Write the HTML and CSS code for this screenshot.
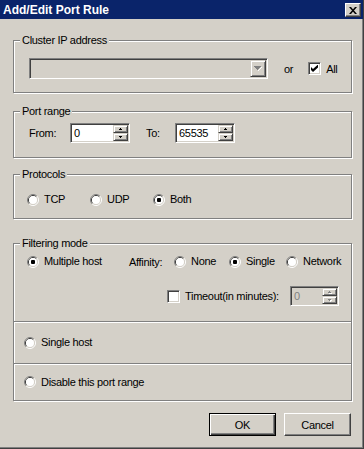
FILE: index.html
```html
<!DOCTYPE html>
<html>
<head>
<meta charset="utf-8">
<link rel="stylesheet" href="styles.css">
</head>
<body>
<div class="window">
  <div class="titlebar">
    <span class="title">Add/Edit Port Rule</span>
    <span class="close"><svg width="8" height="7" viewBox="0 0 8 7"><path d="M0 0H2L8 7H6Z M6 0H8L2 7H0Z" fill="#000"/></svg></span>
  </div>
  <div class="client">
    <fieldset class="group g1">
      <legend>Cluster IP address</legend>
      <div class="row cluster-row">
        <div class="combo sunken">
          <div class="sbtn combo-btn"><svg width="8" height="5" viewBox="0 0 8 5" shape-rendering="crispEdges"><path d="M1 1H8V2H7V3H6V4H5V5H4V4H5V3H6V2H7V1Z" fill="#fff"/><path d="M0 0H7V1H6V2H5V3H4V4H3V3H2V2H1V1H0Z" fill="#808080"/></svg></div>
        </div>
        <span class="or">or</span>
        <span class="check all"><span class="cbox"><svg width="7" height="7" viewBox="0 0 7 7"><path d="M0 2L2 4L7 -0.5V2.5L2 7L0 5Z" fill="#000"/></svg></span>All</span>
      </div>
    </fieldset>

    <fieldset class="group g2">
      <legend>Port range</legend>
      <div class="row port-row">
        <span class="lbl from-lbl">From:</span>
        <div class="spin sunken">
          <span class="spin-val">0</span>
          <span class="spin-btns">
            <span class="sbtn"><svg width="3" height="2" viewBox="0 0 3 2" shape-rendering="crispEdges"><path d="M1 0H2V1H3V2H0V1H1Z" fill="#000"/></svg></span>
            <span class="sbtn"><svg width="3" height="2" viewBox="0 0 3 2" shape-rendering="crispEdges"><path d="M0 0H3V1H2V2H1V1H0Z" fill="#000"/></svg></span>
          </span>
        </div>
        <span class="lbl to-lbl">To:</span>
        <div class="spin sunken">
          <span class="spin-val">65535</span>
          <span class="spin-btns">
            <span class="sbtn"><svg width="3" height="2" viewBox="0 0 3 2" shape-rendering="crispEdges"><path d="M1 0H2V1H3V2H0V1H1Z" fill="#000"/></svg></span>
            <span class="sbtn"><svg width="3" height="2" viewBox="0 0 3 2" shape-rendering="crispEdges"><path d="M0 0H3V1H2V2H1V1H0Z" fill="#000"/></svg></span>
          </span>
        </div>
      </div>
    </fieldset>

    <fieldset class="group g3">
      <legend>Protocols</legend>
      <div class="row proto-row">
        <span class="opt proto"><svg class="radio" width="12" height="12" viewBox="0 0 12 12"><path d="M2.11 9.89A5.5 5.5 0 0 1 9.89 2.11" stroke="#808080"/><path d="M9.89 2.11A5.5 5.5 0 0 1 2.11 9.89" stroke="#fff"/><path d="M2.82 9.18A4.5 4.5 0 0 1 9.18 2.82" stroke="#404040"/><path d="M9.18 2.82A4.5 4.5 0 0 1 2.82 9.18" stroke="#d4d0c8"/><circle cx="6" cy="6" r="4" fill="#fff"/></svg>TCP</span>
        <span class="opt proto"><svg class="radio" width="12" height="12" viewBox="0 0 12 12"><path d="M2.11 9.89A5.5 5.5 0 0 1 9.89 2.11" stroke="#808080"/><path d="M9.89 2.11A5.5 5.5 0 0 1 2.11 9.89" stroke="#fff"/><path d="M2.82 9.18A4.5 4.5 0 0 1 9.18 2.82" stroke="#404040"/><path d="M9.18 2.82A4.5 4.5 0 0 1 2.82 9.18" stroke="#d4d0c8"/><circle cx="6" cy="6" r="4" fill="#fff"/></svg>UDP</span>
        <span class="opt proto"><svg class="radio" width="12" height="12" viewBox="0 0 12 12"><path d="M2.11 9.89A5.5 5.5 0 0 1 9.89 2.11" stroke="#808080"/><path d="M9.89 2.11A5.5 5.5 0 0 1 2.11 9.89" stroke="#fff"/><path d="M2.82 9.18A4.5 4.5 0 0 1 9.18 2.82" stroke="#404040"/><path d="M9.18 2.82A4.5 4.5 0 0 1 2.82 9.18" stroke="#d4d0c8"/><circle cx="6" cy="6" r="4" fill="#fff"/><rect x="4" y="4" width="4" height="4" rx="1" fill="#000"/></svg>Both</span>
      </div>
    </fieldset>

    <fieldset class="group g4">
      <legend>Filtering mode</legend>
      <div class="filter-body">
        <div class="row mode-row">
          <span class="opt multi"><svg class="radio" width="12" height="12" viewBox="0 0 12 12"><path d="M2.11 9.89A5.5 5.5 0 0 1 9.89 2.11" stroke="#808080"/><path d="M9.89 2.11A5.5 5.5 0 0 1 2.11 9.89" stroke="#fff"/><path d="M2.82 9.18A4.5 4.5 0 0 1 9.18 2.82" stroke="#404040"/><path d="M9.18 2.82A4.5 4.5 0 0 1 2.82 9.18" stroke="#d4d0c8"/><circle cx="6" cy="6" r="4" fill="#fff"/><rect x="4" y="4" width="4" height="4" rx="1" fill="#000"/></svg>Multiple host</span>
          <span class="lbl affinity">Affinity:</span>
          <span class="opt none"><svg class="radio" width="12" height="12" viewBox="0 0 12 12"><path d="M2.11 9.89A5.5 5.5 0 0 1 9.89 2.11" stroke="#808080"/><path d="M9.89 2.11A5.5 5.5 0 0 1 2.11 9.89" stroke="#fff"/><path d="M2.82 9.18A4.5 4.5 0 0 1 9.18 2.82" stroke="#404040"/><path d="M9.18 2.82A4.5 4.5 0 0 1 2.82 9.18" stroke="#d4d0c8"/><circle cx="6" cy="6" r="4" fill="#fff"/></svg>None</span>
          <span class="opt single"><svg class="radio" width="12" height="12" viewBox="0 0 12 12"><path d="M2.11 9.89A5.5 5.5 0 0 1 9.89 2.11" stroke="#808080"/><path d="M9.89 2.11A5.5 5.5 0 0 1 2.11 9.89" stroke="#fff"/><path d="M2.82 9.18A4.5 4.5 0 0 1 9.18 2.82" stroke="#404040"/><path d="M9.18 2.82A4.5 4.5 0 0 1 2.82 9.18" stroke="#d4d0c8"/><circle cx="6" cy="6" r="4" fill="#fff"/><rect x="4" y="4" width="4" height="4" rx="1" fill="#000"/></svg>Single</span>
          <span class="opt"><svg class="radio" width="12" height="12" viewBox="0 0 12 12"><path d="M2.11 9.89A5.5 5.5 0 0 1 9.89 2.11" stroke="#808080"/><path d="M9.89 2.11A5.5 5.5 0 0 1 2.11 9.89" stroke="#fff"/><path d="M2.82 9.18A4.5 4.5 0 0 1 9.18 2.82" stroke="#404040"/><path d="M9.18 2.82A4.5 4.5 0 0 1 2.82 9.18" stroke="#d4d0c8"/><circle cx="6" cy="6" r="4" fill="#fff"/></svg>Network</span>
        </div>
        <div class="row timeout-row">
          <span class="check"><span class="cbox"></span><span class="timeout-lbl">Timeout(in minutes):</span></span>
          <div class="spin sunken disabled small">
            <span class="spin-val">0</span>
            <span class="spin-btns">
              <span class="sbtn"><svg width="4" height="3" viewBox="0 0 4 3" shape-rendering="crispEdges"><path d="M2 1H3V2H4V3H1V2H2Z" fill="#fff"/><path d="M1 0H2V1H3V2H0V1H1Z" fill="#808080"/></svg></span>
              <span class="sbtn"><svg width="4" height="3" viewBox="0 0 4 3" shape-rendering="crispEdges"><path d="M1 1H4V2H3V3H2V2H1Z" fill="#fff"/><path d="M0 0H3V1H2V2H1V1H0Z" fill="#808080"/></svg></span>
            </span>
          </div>
        </div>
      </div>
    </fieldset>

    <div class="panel p1">
      <span class="opt"><svg class="radio" width="12" height="12" viewBox="0 0 12 12"><path d="M2.11 9.89A5.5 5.5 0 0 1 9.89 2.11" stroke="#808080"/><path d="M9.89 2.11A5.5 5.5 0 0 1 2.11 9.89" stroke="#fff"/><path d="M2.82 9.18A4.5 4.5 0 0 1 9.18 2.82" stroke="#404040"/><path d="M9.18 2.82A4.5 4.5 0 0 1 2.82 9.18" stroke="#d4d0c8"/><circle cx="6" cy="6" r="4" fill="#fff"/></svg>Single host</span>
    </div>
    <div class="panel p2">
      <span class="opt"><svg class="radio" width="12" height="12" viewBox="0 0 12 12"><path d="M2.11 9.89A5.5 5.5 0 0 1 9.89 2.11" stroke="#808080"/><path d="M9.89 2.11A5.5 5.5 0 0 1 2.11 9.89" stroke="#fff"/><path d="M2.82 9.18A4.5 4.5 0 0 1 9.18 2.82" stroke="#404040"/><path d="M9.18 2.82A4.5 4.5 0 0 1 2.82 9.18" stroke="#d4d0c8"/><circle cx="6" cy="6" r="4" fill="#fff"/></svg>Disable this port range</span>
    </div>

    <div class="buttons">
      <button class="btn default">OK</button>
      <button class="btn">Cancel</button>
    </div>
  </div>
</div>
</body>
</html>
```

FILE: styles.css
```css
* { box-sizing: border-box; }
html, body { margin: 0; padding: 0; }
body {
  width: 364px;
  height: 449px;
  overflow: hidden;
  background: #d4d0c8;
  font-family: "Liberation Sans", Arial, sans-serif;
  font-size: 11px;
  letter-spacing: -0.3px;
  color: #000;
}
.window {
  width: 364px;
  height: 449px;
  border-right: 1px solid #404040;
  border-bottom: 1px solid #404040;
  box-shadow: inset -1px -1px 0 #808080;
  display: flex;
  flex-direction: column;
}
.titlebar {
  height: 19px;
  flex: none;
  background: #0a246a;
  color: #fff;
  display: flex;
  justify-content: space-between;
  align-items: flex-start;
  padding: 0 2px 0 3px;
}
.title {
  font-weight: bold;
  font-size: 12px;
  letter-spacing: 0;
  line-height: 19px;
  padding-top: 1px;
}
.close {
  width: 16px;
  height: 14px;
  margin-top: 3px;
  background: #d4d0c8;
  border: 1px solid;
  border-color: #fff #404040 #404040 #fff;
  box-shadow: inset -1px -1px 0 #808080;
  display: flex;
  align-items: center;
  justify-content: center;
}
.client {
  flex: 1;
  padding: 0 11px 0 13px;
  display: flex;
  flex-direction: column;
}

/* etched group boxes */
.group {
  margin: 0;
  padding: 0;
  min-width: 0;
  border: 1px solid #808080;
  box-shadow: inset 1px 1px 0 #fff, 1px 1px 0 #fff;
}
.group legend {
  margin-left: 6px;
  padding: 0 2px;
  height: 13px;
  line-height: 13px;
  background: #d4d0c8;
}
.g1 { margin-top: 15px; }
.g2 { margin-top: 12px; }
.g3 { margin-top: 10px; }
.g4 { margin-top: 18px; }

.row {
  display: flex;
  align-items: center;
}
.cluster-row { padding: 11px 0 13px 15px; }
.port-row { padding: 5px 0 14px 15px; }
.proto-row { padding: 12px 0 12px 13px; height: 37px; }
.filter-body { padding: 5px 0 15px 13px; }
.mode-row { height: 13px; }
.timeout-row { margin-top: 18px; margin-left: 140px; }

.panel {
  border: 1px solid #808080;
  box-shadow: inset 1px 1px 0 #fff, 1px 1px 0 #fff;
  margin-top: -1px;
  display: flex;
  align-items: center;
  padding-left: 10px;
}
.p1 { height: 43px; }
.p2 { height: 38px; }

/* controls */
.sunken {
  border: 1px solid;
  border-color: #808080 #fff #fff #808080;
  box-shadow: inset 1px 1px 0 #404040, inset -1px -1px 0 #d4d0c8;
  padding: 1px;
}
.sbtn {
  display: flex;
  align-items: center;
  justify-content: center;
  background: #d4d0c8;
  border: 1px solid;
  border-color: #d4d0c8 #404040 #404040 #d4d0c8;
  box-shadow: inset 1px 1px 0 #fff, inset -1px -1px 0 #808080;
}
.combo {
  width: 239px;
  height: 21px;
  display: flex;
  justify-content: flex-end;
  background: #d4d0c8;
}
.combo-btn { width: 16px; height: 17px; }
.or { margin-left: 16px; }
.check {
  display: flex;
  align-items: center;
  gap: 5px;
}
.all { margin-left: 15px; }
.cbox {
  width: 13px;
  height: 13px;
  background: #fff;
  border: 1px solid;
  border-color: #808080 #fff #fff #808080;
  box-shadow: inset 1px 1px 0 #404040, inset -1px -1px 0 #d4d0c8;
  display: flex;
  align-items: center;
  justify-content: center;
}
.cbox svg { margin: 0 0 0 0; }

.lbl { white-space: nowrap; }
.from-lbl { width: 41px; }
.to-lbl { width: 29px; margin-left: 16px; }
.spin {
  width: 60px;
  height: 20px;
  display: flex;
  background: #fff;
}
.spin-val {
  flex: 1;
  padding-left: 2px;
  line-height: 16px;
}
.spin-btns {
  width: 15px;
  display: flex;
  flex-direction: column;
}
.spin-btns .sbtn { height: 8px; }
.spin.disabled { background: #d4d0c8; color: #808080; }
.spin.small { width: 49px; margin-left: 0; }
.timeout-lbl { width: 105px; }

.opt {
  display: flex;
  align-items: center;
  gap: 5px;
  white-space: nowrap;
  line-height: 13px;
}
.radio { flex: none; }
.radio path { fill: none; stroke-width: 1; }
.proto { width: 63px; }
.multi { width: 102px; }
.affinity { width: 45px; }
.none { width: 55px; }
.single { width: 57px; }

.buttons {
  margin-top: 12px;
  display: flex;
  justify-content: flex-end;
  gap: 8px;
  padding-right: 1px;
}
.btn {
  width: 67px;
  height: 23px;
  margin: 0;
  padding: 0;
  font: inherit;
  letter-spacing: inherit;
  color: #000;
  background: #d4d0c8;
  border: 1px solid;
  border-color: #fff #404040 #404040 #fff;
  box-shadow: inset -1px -1px 0 #808080;
  display: flex;
  align-items: center;
  justify-content: center;
}
.btn.default {
  border-color: #000;
  box-shadow: inset 1px 1px 0 #fff, inset -1px -1px 0 #404040, inset -2px -2px 0 #808080;
}
```
